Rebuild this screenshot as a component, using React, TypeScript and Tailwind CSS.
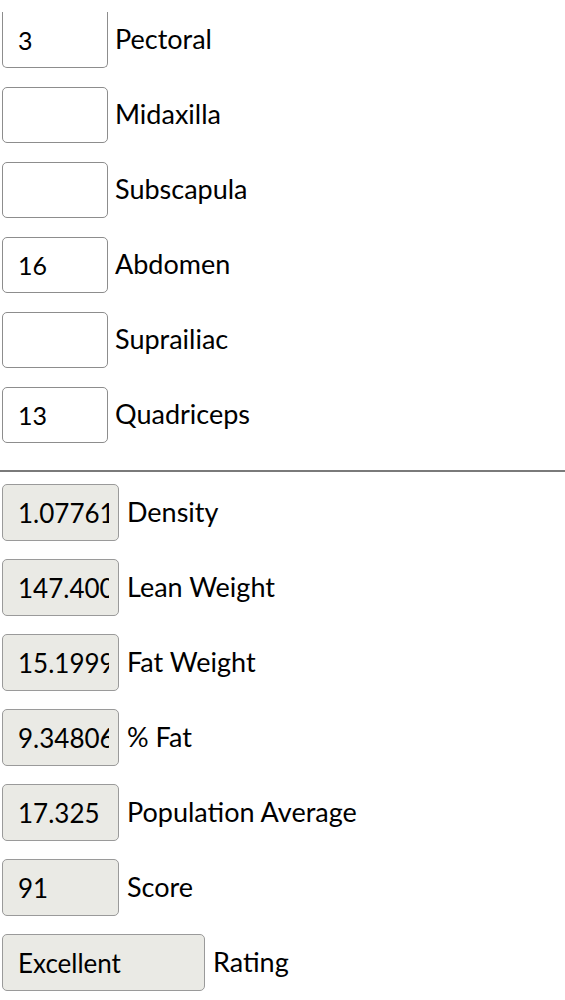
import React from "react";

const inputs = [
  { v: "3", l: "Pectoral" },
  { v: "", l: "Midaxilla" },
  { v: "", l: "Subscapula" },
  { v: "16", l: "Abdomen" },
  { v: "", l: "Suprailiac" },
  { v: "13", l: "Quadriceps" },
];

const outputs = [
  { v: "1.0776123456", l: "Density", w: "w-[117px]" },
  { v: "147.4000012", l: "Lean Weight", w: "w-[117px]" },
  { v: "15.19999876", l: "Fat Weight", w: "w-[117px]" },
  { v: "9.348067654", l: "% Fat", w: "w-[117px]" },
  { v: "17.325", l: "Population Average", w: "w-[117px]" },
  { v: "91", l: "Score", w: "w-[117px]" },
  { v: "Excellent", l: "Rating", w: "w-[203px]" },
];

export default function App() {
  return (
    <div
      className="bg-white text-black min-h-[1000px] overflow-hidden"
      style={{ fontFamily: "Lato, 'Noto Sans', sans-serif" }}
    >
      <div className="flex flex-col gap-[19px] pl-[2px] pt-[12px]">
        {inputs.map((r, i) => (
          <div key={r.l} className="flex items-center gap-[7px] h-[56px]">
            <input
              readOnly
              value={r.v}
              className={
                "w-[106px] h-[56px] bg-white border border-[#8d8d8d] pl-[15px] text-[25px] text-black outline-none " +
                (i === 0 ? "border-t-0 rounded-b-[5px]" : "rounded-[5px]")
              }
              style={{ fontFamily: "Lato, 'Noto Sans', sans-serif" }}
            />
            <span className="text-[27px] leading-none pb-[3px]">{r.l}</span>
          </div>
        ))}
      </div>
      <hr className="mt-[27px] border-0 h-[2px] bg-[#7a7a7a]" />
      <div className="flex flex-col gap-[18px] pl-[2px] pt-[12px]">
        {outputs.map((r) => (
          <div key={r.l} className="flex items-center gap-[8px] h-[57px]">
            <input
              readOnly
              value={r.v}
              className={
                r.w +
                " h-[57px] bg-[#eaeae5] border border-[#9a9a9a] rounded-[5px] pl-[15px] pr-[9px] text-[26px] text-black outline-none"
              }
              style={{ fontFamily: "Lato, 'Noto Sans', sans-serif" }}
            />
            <span className="text-[27px] leading-none pb-[3px]">{r.l}</span>
          </div>
        ))}
      </div>
    </div>
  );
}
